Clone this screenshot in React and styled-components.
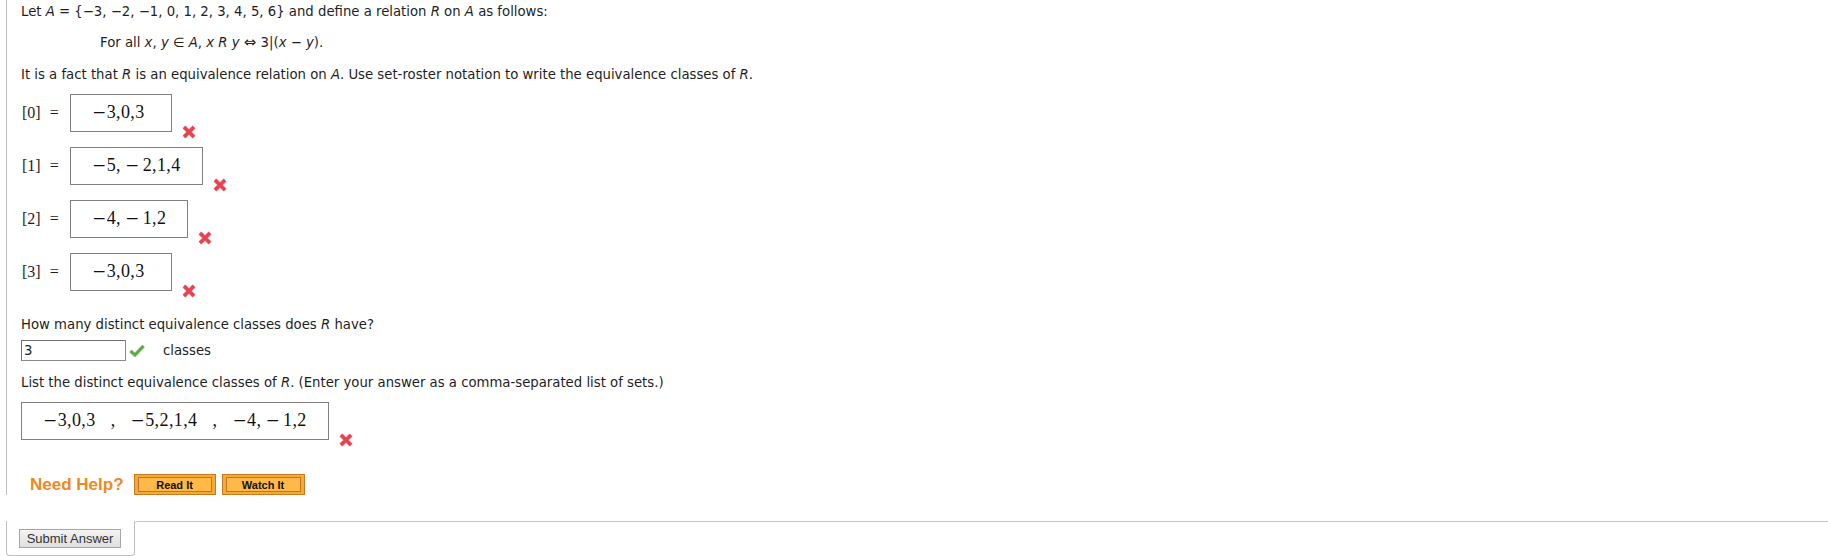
import styled, { createGlobalStyle } from "styled-components";

const GlobalStyle = createGlobalStyle`
  html, body {
    margin: 0;
    padding: 0;
    background: #fff;
  }
  body {
    font-family: "DejaVu Sans", Verdana, sans-serif;
    font-size: 13.25px;
    color: #1e1e1e;
  }
`;

const Page = styled.div`
  display: flex;
  flex-direction: column;
  padding-left: 6px;
  width: 1828px;
  box-sizing: border-box;
`;

const Panel = styled.div`
  border-left: 1px solid #bfbfbf;
  padding: 4px 0 0 14px;
  display: flex;
  flex-direction: column;
  align-items: flex-start;
`;

const Para = styled.div`
  line-height: 16px;
  margin-top: ${(p) => p.$top || 0}px;
  padding-left: ${(p) => p.$indent || 0}px;
  white-space: nowrap;
`;

const Var = styled.i`
  font-style: italic;
`;

const Iff = styled.span`
  font-size: 15px;
  line-height: 1;
`;

const AnswerRow = styled.div`
  display: flex;
  align-items: center;
  margin-top: ${(p) => p.$top || 0}px;
`;

const RowLabel = styled.span`
  font-family: "Liberation Serif", "Times New Roman", serif;
  font-size: 16px;
  width: 48px;
  display: flex;
  align-items: center;
  padding-left: 1px;

  & b {
    font-weight: normal;
    margin-left: 9px;
  }
`;

const MathBox = styled.div`
  height: 38px;
  min-width: ${(p) => p.$min || 0}px;
  box-sizing: border-box;
  border: 1px solid #808080;
  display: flex;
  align-items: center;
  padding: 0 21px 2px;
  font-family: "Liberation Serif", "Times New Roman", serif;
  font-size: 18px;
  letter-spacing: 0.4px;
  color: #111;
  white-space: pre;
`;

const Minus = styled.span`
  font-family: "DejaVu Serif", serif;
  font-size: 17px;
  margin-left: ${(p) => (p.$bin ? 4 : 0)}px;
  margin-right: ${(p) => (p.$bin ? 3 : 0)}px;
`;

const Mark = styled.span`
  align-self: flex-end;
  margin: 0 0 -7px 10px;
  display: inline-flex;
`;

const CountRow = styled.div`
  display: flex;
  align-items: center;
  margin-top: 7px;
`;

const SmallInput = styled.div`
  width: 105px;
  height: 21px;
  box-sizing: border-box;
  border: 1px solid #8a8a8a;
  border-top-color: #6f6f6f;
  border-left-color: #6f6f6f;
  padding: 1px 2px;
  line-height: 17px;
  color: #222;
`;

const CheckWrap = styled.span`
  margin-left: 3px;
  display: inline-flex;
`;

const Unit = styled.span`
  margin-left: 18px;
`;

const Sep = styled.span`
  margin: 0 15px 0 15px;
`;

const HelpRow = styled.div`
  display: flex;
  align-items: center;
  margin-top: 34px;
  padding-left: 9px;
`;

const HelpLabel = styled.span`
  font-family: "Liberation Sans", Arial, sans-serif;
  font-weight: bold;
  font-size: 17px;
  color: #f0891d;
  margin-right: 10px;
`;

const HelpButton = styled.div`
  width: ${(p) => p.$w}px;
  height: 21px;
  box-sizing: border-box;
  border: 1px solid #c77b1e;
  background: #f9a835;
  padding: 2px 3px;
  margin-right: 6px;
  display: flex;

  & span {
    flex: 1;
    border: 1px solid #b8782d;
    background: #ffb948;
    font-family: "Liberation Sans", Arial, sans-serif;
    font-weight: bold;
    font-size: 11px;
    color: #111;
    display: flex;
    align-items: center;
    justify-content: center;
  }
`;

const Footer = styled.div`
  display: flex;
  margin-top: 26px;
`;

const SubmitTab = styled.div`
  width: 129px;
  height: 35px;
  box-sizing: border-box;
  border: 1px solid #bfbfbf;
  border-top: none;
  border-radius: 0 0 4px 4px;
  padding: 8px 0 0 12px;
`;

const SubmitButton = styled.div`
  width: 102px;
  height: 19px;
  box-sizing: border-box;
  border: 1px solid #a6a6a6;
  background: linear-gradient(#f4f4f4, #dedede);
  font-family: "Liberation Sans", Arial, sans-serif;
  font-size: 13px;
  color: #333;
  display: flex;
  align-items: center;
  justify-content: center;
`;

const FooterRest = styled.div`
  flex: 1;
  border-top: 1px solid #c4c4c4;
  border-top-left-radius: 3px;
`;

function WrongIcon() {
  return (
    <svg width="14" height="14" viewBox="0 0 14 14">
      <path d="M2 2 L12 12 M12 2 L2 12" stroke="#f0a0a6" strokeWidth="4.4" />
      <path d="M2 2 L12 12 M12 2 L2 12" stroke="#e8414f" strokeWidth="3.2" />
    </svg>
  );
}

function RightIcon() {
  return (
    <svg width="16" height="13" viewBox="0 0 16 13">
      <path d="M1.5 7 L6 11 L14.5 2" fill="none" stroke="#a8d39a" strokeWidth="4" />
      <path d="M1.5 7 L6 11 L14.5 2" fill="none" stroke="#5ea84a" strokeWidth="2.6" />
    </svg>
  );
}

// renders a math string; "~" marks a binary minus, "−" a leading one
function Math({ text }) {
  const out = [];
  let buf = "";
  [...text].forEach((ch, i) => {
    if (ch === "−" || ch === "~") {
      if (buf) out.push(<span key={"t" + i}>{buf}</span>);
      buf = "";
      out.push(
        <Minus key={"m" + i} $bin={ch === "~"}>
          −
        </Minus>
      );
    } else {
      buf += ch;
    }
  });
  if (buf) out.push(<span key="end">{buf}</span>);
  return out;
}

const rows = [
  { n: 0, v: "−3,0,3", min: 102 },
  { n: 1, v: "−5,~2,1,4", min: 0 },
  { n: 2, v: "−4,~1,2", min: 0 },
  { n: 3, v: "−3,0,3", min: 102 },
];

export default function App() {
  return (
    <Page>
      <GlobalStyle />
      <Panel>
        <Para>
          Let <Var>A</Var> = {"{"}−3, −2, −1, 0, 1, 2, 3, 4, 5, 6{"}"} and define a relation <Var>R</Var> on <Var>A</Var> as follows:
        </Para>
        <Para $top={15} $indent={79}>
          For all <Var>x</Var>, <Var>y</Var> ∈ <Var>A</Var>, <Var>x</Var> <Var>R</Var> <Var>y</Var> <Iff>⇔</Iff> 3|(<Var>x</Var> − <Var>y</Var>).
        </Para>
        <Para $top={16}>
          It is a fact that <Var>R</Var> is an equivalence relation on <Var>A</Var>. Use set-roster notation to write the equivalence classes of <Var>R</Var>.
        </Para>

        {rows.map((r, i) => (
          <AnswerRow key={r.n} $top={i === 0 ? 11 : 15}>
            <RowLabel>
              [{r.n}]<b>=</b>
            </RowLabel>
            <MathBox $min={r.min}>
              <Math text={r.v} />
            </MathBox>
            <Mark>
              <WrongIcon />
            </Mark>
          </AnswerRow>
        ))}

        <Para $top={26}>
          How many distinct equivalence classes does <Var>R</Var> have?
        </Para>
        <CountRow>
          <SmallInput>3</SmallInput>
          <CheckWrap>
            <RightIcon />
          </CheckWrap>
          <Unit>classes</Unit>
        </CountRow>

        <Para $top={14}>
          List the distinct equivalence classes of <Var>R</Var>. (Enter your answer as a comma-separated list of sets.)
        </Para>
        <AnswerRow $top={11}>
          <MathBox>
            <Math text="−3,0,3" />
            <Sep>,</Sep>
            <Math text="−5,2,1,4" />
            <Sep>,</Sep>
            <Math text="−4,~1,2" />
          </MathBox>
          <Mark>
            <WrongIcon />
          </Mark>
        </AnswerRow>

        <HelpRow>
          <HelpLabel>Need Help?</HelpLabel>
          <HelpButton $w={82}>
            <span>Read It</span>
          </HelpButton>
          <HelpButton $w={83}>
            <span>Watch It</span>
          </HelpButton>
        </HelpRow>
      </Panel>
      <Footer>
        <SubmitTab>
          <SubmitButton>Submit Answer</SubmitButton>
        </SubmitTab>
        <FooterRest />
      </Footer>
    </Page>
  );
}
